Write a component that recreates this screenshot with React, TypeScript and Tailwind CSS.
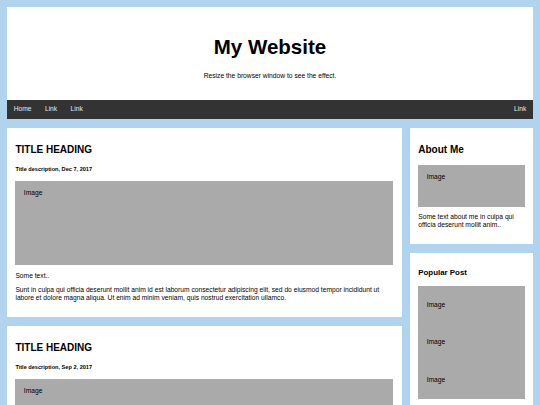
import React from 'react';

const FakeImg = ({ h, children }: { h?: string; children: React.ReactNode }) => (
  <div className={`bg-[#aaaaaa] px-[8.4px] pt-[8.4px] text-[6.7px] leading-[8px] ${h ?? ''}`}>{children}</div>
);

const Post = ({ date }: { date: string }) => (
  <div className="bg-white px-[8.4px] pt-[9px] pb-[15px]">
    <h2 className="mt-[7px] text-[10px] font-bold leading-[12px]">TITLE HEADING</h2>
    <h5 className="mt-[9.5px] text-[5.6px] font-bold leading-[7px]">{date}</h5>
    <div className="mt-[8.5px]">
      <FakeImg h="h-[84px]">Image</FakeImg>
    </div>
    <p className="mt-[7px] text-[6.7px] leading-[8px]">Some text..</p>
    <p className="mt-[6px] text-[6.7px] leading-[8px]">
      Sunt in culpa qui officia deserunt mollit anim id est laborum consectetur adipiscing elit, sed do eiusmod tempor
      incididunt ut labore et dolore magna aliqua. Ut enim ad minim veniam, quis nostrud exercitation ullamco.
    </p>
  </div>
);

export default function App() {
  return (
    <div className="min-h-[405px] bg-[#b0d4ee] p-[7px] text-black font-['Liberation_Sans',Arial,sans-serif]">
      <header className="h-[93px] bg-white pt-[28px] text-center">
        <h1 className="text-[20.5px] font-bold leading-[23px]">My Website</h1>
        <p className="mt-[14px] text-[6.7px] leading-[8px]">Resize the browser window to see the effect.</p>
      </header>

      <nav className="flex h-[19px] items-center bg-[#333333] text-[6.7px] text-[#e4eaf0]">
        <a className="px-[6.7px]">Home</a>
        <a className="px-[6.7px]">Link</a>
        <a className="px-[6.7px]">Link</a>
        <a className="ml-auto px-[6.7px]">Link</a>
      </nav>

      <div className="mt-[9px] flex">
        <div className="flex w-3/4 flex-col gap-[9px]">
          <Post date="Title description, Dec 7, 2017" />
          <Post date="Title description, Sep 2, 2017" />
        </div>

        <div className="flex w-1/4 flex-col gap-[9px] pl-[8.4px]">
          <div className="bg-white px-[8.4px] pt-[9px] pb-[15.5px]">
            <h2 className="mt-[7px] text-[10px] font-bold leading-[12px]">About Me</h2>
            <div className="mt-[9px]">
              <FakeImg h="h-[42px]">Image</FakeImg>
            </div>
            <p className="mt-[5.5px] text-[6.7px] leading-[8px]">Some text about me in culpa qui officia deserunt mollit anim..</p>
          </div>

          <div className="bg-white px-[8.4px] pt-[9px] pb-[15px]">
            <h3 className="mt-[6px] text-[7.9px] font-bold leading-[9.5px]">Popular Post</h3>
            <div className="mt-[8px]">
              {[0, 1, 2].map((i) => (
                <div key={i} className="bg-[#aaaaaa] px-[8.4px] py-[15px] text-[6.7px] leading-[7.7px]">
                  Image
                </div>
              ))}
            </div>
          </div>

          <div className="bg-white px-[8.4px] pt-[9px] pb-[15px]">
            <h3 className="mt-[6px] text-[7.9px] font-bold leading-[9.5px]">Follow Me</h3>
            <p className="mt-[6px] text-[6.7px] leading-[8px]">Some text..</p>
          </div>
        </div>
      </div>
    </div>
  );
}
